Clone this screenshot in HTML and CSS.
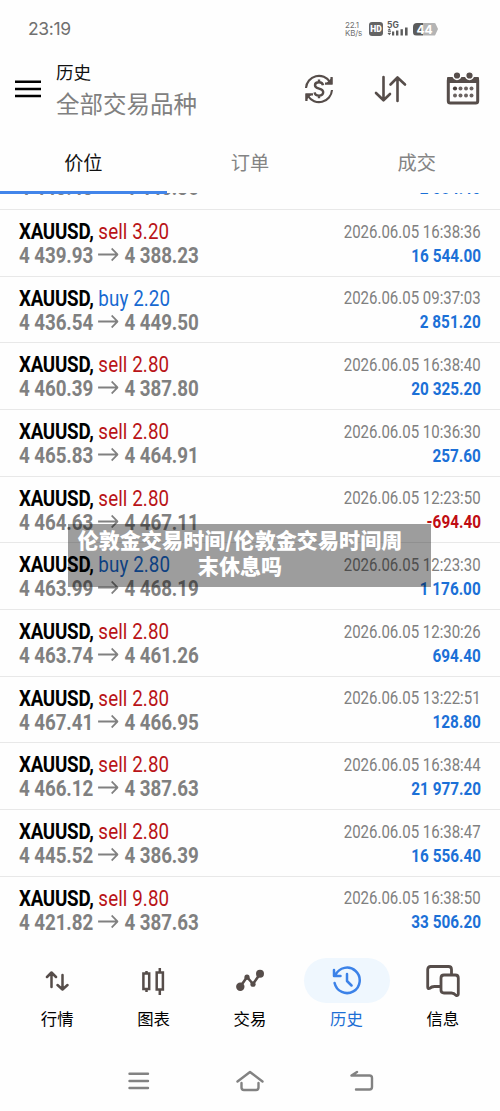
FILE: index.html
```html
<!DOCTYPE html>
<html lang="zh-CN">
<head>
<meta charset="utf-8">
<title>历史</title>
<link rel="stylesheet" href="styles.css">
</head>
<body>
<svg class="defs" width="0" height="0"><symbol id="arrow" viewBox="0 0 24 14"><path d="M0 7H23M16 1L23 7L16 13" fill="none" stroke="#808080" stroke-width="1.9"/></symbol></svg>
<header class="status">
  <span class="clock">23:19</span>
  <div class="indicators">
    <div class="speed"><span>22.1</span><span>KB/s</span></div>
    <span class="hd">HD</span>
    <svg class="signal" width="22" height="16" viewBox="0 0 22 16"><text x="0" y="7" class="fiveg">5G</text><g fill="#5c5c5c"><path d="M.5 9.5L2.3 7.3L4.1 9.5ZM.5 12L2.3 14.2L4.1 12Z"/><rect x="1" y="10.2" width="3" height="1"/><rect x="5" y="10.5" width="2.2" height="4"/><rect x="9" y="9.5" width="2.4" height="5"/><rect x="13.5" y="8.2" width="2.4" height="6.3"/><rect x="18" y="6.5" width="2.6" height="8"/></g></svg>
    <span class="battery">44</span>
  </div>
</header>
<section class="toolbar">
  <svg class="menu" width="26" height="18" viewBox="0 0 26 18"><path d="M0 1.8H26M0 9H26M0 16H26" stroke="#000" stroke-width="2.6"/></svg>
  <div class="heading"><h1>历史</h1><p>全部交易品种</p></div>
  <div class="actions">
    <svg width="30" height="30" viewBox="0 0 30 30" fill="none" stroke="#564d4a" stroke-width="2.1"><path d="M2 14A13 13 0 0 1 26 8M28 16A13 13 0 0 1 4 22"/><path d="M28.5 3V10.5H20.5L23.5 8ZM1.5 27V19.5H9.5L6 22Z" fill="#564d4a" stroke="none"/><path d="M27.5 3V9.5H21M2.5 27V20.5H9"/><path d="M19 11.2C18.6 8.7 16.8 8.2 15 8.2C12.7 8.2 11 9.3 11 11.2C11 15.6 19.2 13.5 19.2 18C19.2 20.3 17.3 21.6 15 21.6C12.6 21.6 10.9 20.4 10.7 18.3M15 5.5V8M15 21.8V24.3" stroke-width="2.4"/></svg>
    <svg width="33" height="28" viewBox="0 0 33 28" fill="none" stroke="#564d4a" stroke-width="2.6" stroke-linecap="round" stroke-linejoin="round"><path d="M9.5 2V25M2 18L9.5 25.3L16 19M23.5 26V2.5M16.5 9.5L23.5 2.5L31 9.5"/></svg>
    <svg width="34" height="34" viewBox="0 0 34 34"><rect x="2.3" y="7.5" width="29.4" height="24.5" rx="2" fill="none" stroke="#564d4a" stroke-width="3"/><path d="M1 7Q1 6 2 6H32Q33 6 33 7V12H1Z" fill="#564d4a"/><g fill="#564d4a" stroke="#fefefe" stroke-width="1.6"><circle cx="11" cy="4.5" r="3.9"/><circle cx="23.5" cy="4.5" r="3.9"/></g><g fill="#6b6361"><circle cx="9" cy="17.5" r="2.1" fill="#463d3a"/><circle cx="14.5" cy="17.5" r="2"/><circle cx="20" cy="17.5" r="2"/><circle cx="25.5" cy="17.5" r="2"/><circle cx="9" cy="24.5" r="2"/><circle cx="14.5" cy="24.5" r="2"/><circle cx="20" cy="24.5" r="2"/><circle cx="25.5" cy="24.5" r="2"/></g></svg>
  </div>
</section>
<nav class="tabs"><span class="active">价位</span><span>订单</span><span>成交</span></nav>
<main class="deals">
  <article class="deal first"><div class="left"><div class="prices"><b>4 443.43</b><svg><use href="#arrow"/></svg><b>4 443.36</b></div></div><div class="right"><strong>2 084.40</strong></div></article>
  <article class="deal"><div class="left"><div class="name"><b>XAUUSD,</b> <i class="sell">sell 3.20</i></div><div class="prices"><b>4 439.93</b><svg><use href="#arrow"/></svg><b>4 388.23</b></div></div><div class="right"><time>2026.06.05 16:38:36</time><strong>16 544.00</strong></div></article>
  <article class="deal"><div class="left"><div class="name"><b>XAUUSD,</b> <i class="buy">buy 2.20</i></div><div class="prices"><b>4 436.54</b><svg><use href="#arrow"/></svg><b>4 449.50</b></div></div><div class="right"><time>2026.06.05 09:37:03</time><strong>2 851.20</strong></div></article>
  <article class="deal"><div class="left"><div class="name"><b>XAUUSD,</b> <i class="sell">sell 2.80</i></div><div class="prices"><b>4 460.39</b><svg><use href="#arrow"/></svg><b>4 387.80</b></div></div><div class="right"><time>2026.06.05 16:38:40</time><strong>20 325.20</strong></div></article>
  <article class="deal"><div class="left"><div class="name"><b>XAUUSD,</b> <i class="sell">sell 2.80</i></div><div class="prices"><b>4 465.83</b><svg><use href="#arrow"/></svg><b>4 464.91</b></div></div><div class="right"><time>2026.06.05 10:36:30</time><strong>257.60</strong></div></article>
  <article class="deal"><div class="left"><div class="name"><b>XAUUSD,</b> <i class="sell">sell 2.80</i></div><div class="prices"><b>4 464.63</b><svg><use href="#arrow"/></svg><b>4 467.11</b></div></div><div class="right"><time>2026.06.05 12:23:50</time><strong class="loss">-694.40</strong></div></article>
  <article class="deal"><div class="left"><div class="name"><b>XAUUSD,</b> <i class="buy">buy 2.80</i></div><div class="prices"><b>4 463.99</b><svg><use href="#arrow"/></svg><b>4 468.19</b></div></div><div class="right"><time>2026.06.05 12:23:30</time><strong>1 176.00</strong></div></article>
  <article class="deal"><div class="left"><div class="name"><b>XAUUSD,</b> <i class="sell">sell 2.80</i></div><div class="prices"><b>4 463.74</b><svg><use href="#arrow"/></svg><b>4 461.26</b></div></div><div class="right"><time>2026.06.05 12:30:26</time><strong>694.40</strong></div></article>
  <article class="deal"><div class="left"><div class="name"><b>XAUUSD,</b> <i class="sell">sell 2.80</i></div><div class="prices"><b>4 467.41</b><svg><use href="#arrow"/></svg><b>4 466.95</b></div></div><div class="right"><time>2026.06.05 13:22:51</time><strong>128.80</strong></div></article>
  <article class="deal"><div class="left"><div class="name"><b>XAUUSD,</b> <i class="sell">sell 2.80</i></div><div class="prices"><b>4 466.12</b><svg><use href="#arrow"/></svg><b>4 387.63</b></div></div><div class="right"><time>2026.06.05 16:38:44</time><strong>21 977.20</strong></div></article>
  <article class="deal"><div class="left"><div class="name"><b>XAUUSD,</b> <i class="sell">sell 2.80</i></div><div class="prices"><b>4 445.52</b><svg><use href="#arrow"/></svg><b>4 386.39</b></div></div><div class="right"><time>2026.06.05 16:38:47</time><strong>16 556.40</strong></div></article>
  <article class="deal"><div class="left"><div class="name"><b>XAUUSD,</b> <i class="sell">sell 9.80</i></div><div class="prices"><b>4 421.82</b><svg><use href="#arrow"/></svg><b>4 387.63</b></div></div><div class="right"><time>2026.06.05 16:38:50</time><strong>33 506.20</strong></div></article>
</main>
<nav class="bottom">
  <a><span class="pill"><svg width="24" height="20" viewBox="0 0 24 20" fill="none" stroke="#564d4a" stroke-width="2.5" stroke-linecap="round" stroke-linejoin="round"><path d="M6.5 16V2M2 6L6.5 1.5L11 6M17.5 4V18M12.5 14L17.5 18.5L22.5 14"/></svg></span>行情</a>
  <a><span class="pill"><svg width="26" height="28" viewBox="0 0 26 28" fill="none" stroke="#564d4a" stroke-width="2.5"><path d="M5.5 4V7M5.5 22V25M2.4 6.5H8.2V22H2.4ZM18.8 1V5.5M18.8 22V28M15.7 5.5H21.9V22.5H15.7Z"/></svg></span>图表</a>
  <a><span class="pill"><svg width="28" height="24" viewBox="0 0 28 24"><path d="M4 18L11 8L17 15L24 5" fill="none" stroke="#564d4a" stroke-width="2.6"/><g fill="#564d4a"><circle cx="4.3" cy="17.8" r="4.2"/><circle cx="11" cy="8.2" r="2.6"/><circle cx="17" cy="15.2" r="2.6"/><circle cx="24" cy="4.8" r="4"/></g></svg></span>交易</a>
  <a class="current"><span class="pill"><svg width="30" height="30" viewBox="0 0 30 30" fill="none" stroke="#3c82e8" stroke-width="2.5" stroke-linecap="round" stroke-linejoin="round"><path d="M3.5 9A12.7 12.7 0 1 1 2.6 17M2 4V10H8.5M15 8V15L19.5 19.5"/></svg></span>历史</a>
  <a><span class="pill"><svg width="34" height="32" viewBox="0 0 34 32" fill="none" stroke="#564d4a" stroke-width="2.8" stroke-linejoin="round"><path d="M14 21.5H8.5Q5.5 21.5 3.5 23.5Q1.7 24 1.7 22V4.5Q1.7 1.5 4.7 1.5H22.5Q25.5 1.5 25.5 4.5V10M18 10H29.3Q32.3 10 32.3 13V29Q32.3 31 30 30.3Q28 28 25.5 28H18Q15 28 15 25V13Q15 10 18 10Z"/></svg></span>信息</a>
</nav>
<footer class="system">
  <svg width="22" height="20" viewBox="0 0 22 20"><path d="M1.5 2.8H20M1.5 10H20M1.5 17H20"/></svg>
  <svg width="28" height="22" viewBox="0 0 28 22"><path d="M1.5 11.5L14 2L26.5 11.5M5.5 13V17.5Q5.5 20 8 20H20Q22.5 20 22.5 17.5V13"/></svg>
  <svg width="24" height="22" viewBox="0 0 24 22"><path d="M7 2L1.5 5.5H19.5Q22 5.5 22 8V17Q22 19.5 19.5 19.5H6"/></svg>
</footer>
<div class="caption">伦敦金交易时间/伦敦金交易时间周<br>末休息吗</div>
</body>
</html>
```

FILE: styles.css
```css
* { box-sizing: border-box; }
body { margin: 0; width: 500px; height: 1111px; position: relative; overflow: hidden; background: #fefefe; font-family: Roboto, "Noto Sans CJK SC", sans-serif; }
svg { display: block; flex: none; }
.defs { position: absolute; }
.status { height: 58px; display: flex; justify-content: space-between; align-items: center; padding: 0 63px 0 28px; color: #707070; }
.clock { font: 17.5px/20px Inter, sans-serif; letter-spacing: -.35px; }
.indicators { display: flex; align-items: center; height: 16px; }
.speed { width: 23px; margin-right: 1px; display: flex; flex-direction: column; font: 8px/8px Inter, sans-serif; letter-spacing: -.2px; white-space: nowrap; }
.hd { width: 14px; height: 14px; border-radius: 3px; background: #646464; color: #fff; font: 900 8.5px/14px Roboto, sans-serif; text-align: center; }
.signal { margin-left: 4px; }
.fiveg { font: 700 8.5px Inter, sans-serif; fill: #5c5c5c; }
.battery { width: 25px; height: 13px; margin: 0 -1px 0 4px; padding-right: 2px; clip-path: polygon(0 0, 88% 0, 100% 50%, 88% 100%, 0 100%); border-radius: 4px; background: linear-gradient(90deg, #5b5b5b 42%, #b4b4b4 42%); color: #fff; font: 700 12px/13px Inter, sans-serif; text-align: center; }
.toolbar { height: 72px; padding: 0 20px 0 15px; display: flex; }
.menu { margin-top: 22px; }
.heading { margin-left: 15px; }
h1 { margin: 2px 0 0; font-size: 17.6px; font-weight: 400; line-height: 26px; color: #111; }
.heading p { margin: 2px 0 0; font-size: 23.5px; line-height: 34px; color: #808080; }
.actions { margin-left: auto; height: 62px; display: flex; align-items: center; gap: 39.5px; }
.actions svg:last-child { margin: -2px 0 0 0; }
.tabs { height: 64px; display: grid; grid-template-columns: repeat(3, 1fr); text-align: center; font-size: 19.2px; line-height: 68px; color: #848484; position: relative; z-index: 1; }
.tabs span { height: 64px; }
.tabs .active { color: #111; border-bottom: 3px solid #4285ea; }
.deals { height: 749px; margin-top: -1px; overflow: hidden; }
.deal { height: 66.67px; padding: 0 19.5px 0 19.4px; border-top: 1.5px solid #e8e8e8; display: flex; justify-content: space-between; }
.deal.first { height: 16px; border: 0; align-items: flex-end; }
.deal.first > div { padding: 0 0 10px; }
.deal.first > .right { padding-bottom: 9px; }
.left { padding-top: 9px; transform: translateY(-.5px) scaleX(.85); transform-origin: 0 0; font-size: 22.1px; line-height: 24px; white-space: nowrap; }
.left b { font-weight: 700; }
.name b { color: #000; letter-spacing: -.3px; }
.name i { font-style: normal; letter-spacing: .1px; }
.sell { color: #b91418; }
.buy { color: #1769d1; }
.prices { display: flex; align-items: center; color: #808080; letter-spacing: -.1px; }
.prices svg { width: 24px; height: 14px; margin: 0 7px 0 6px; }
.right { padding-top: 9.8px; display: flex; flex-direction: column; align-items: flex-end; font-size: 18.7px; line-height: 24px; color: #808080; white-space: nowrap; }
.right time { transform: scaleX(.802); transform-origin: 100% 0; }
.right strong { font-size: 18px; color: #1b70d7; transform: scaleX(.85); transform-origin: 100% 0; }
.right .loss { color: #c00c12; }
.bottom { height: 98px; padding: 16px 9px 0; display: grid; grid-template-columns: repeat(5, 1fr); }
.bottom a { display: flex; flex-direction: column; align-items: center; font-size: 16.4px; line-height: 34px; color: #000; }
.pill { width: 86px; height: 45px; border-radius: 23px; display: flex; align-items: center; justify-content: center; }
.current .pill { background: #eff7fe; margin-left: 1px; }
.bottom .current { color: #1d6fd5; }
.system { height: 71px; padding: 11px 126px 0 127px; display: flex; justify-content: space-between; align-items: flex-start; margin-top: 19px; }
.system svg:first-child { margin: 1px 0 0 1px; }
.system path { fill: none; stroke: #828282; stroke-width: 2.4; stroke-linecap: round; stroke-linejoin: round; }
.caption { position: absolute; left: 68px; top: 524px; width: 363px; height: 63px; padding: 2px 28px 0 9px; background: rgba(0, 0, 0, .38); color: #fff; font: 900 21px/26px "Noto Sans CJK SC", sans-serif; letter-spacing: .1px; text-align: center; white-space: nowrap; z-index: 2; }
```
